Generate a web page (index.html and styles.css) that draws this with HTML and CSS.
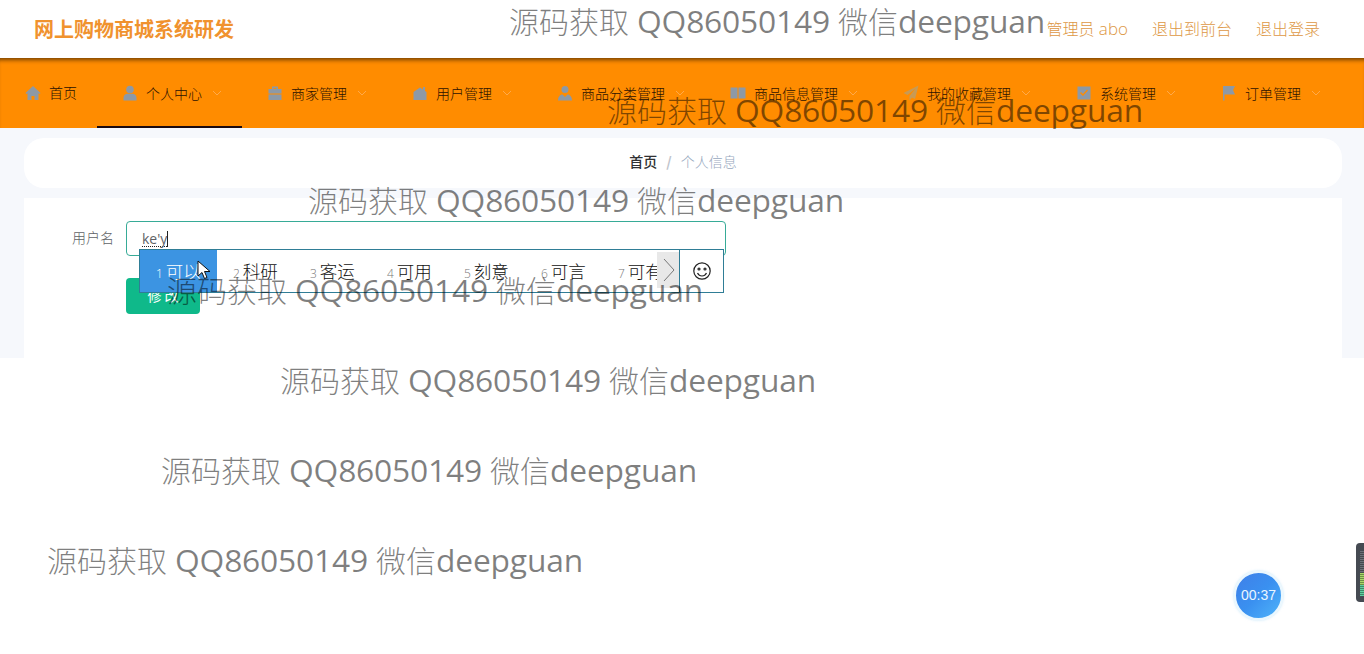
FILE: index.html
```html
<!DOCTYPE html>
<html lang="zh-CN">
<head>
<meta charset="utf-8">
<title>网上购物商城系统研发</title>
<link rel="stylesheet" href="styles.css">
</head>
<body>
<header class="topbar">
  <h1 class="brand">网上购物商城系统研发</h1>
  <div class="top-links">
    <span>管理员<span class="link-latin"> abo</span></span>
    <span>退出到前台</span>
    <span>退出登录</span>
  </div>
</header>
<nav class="nav">
  <a class="nav-item plain"><svg class="ico" viewBox="0 0 16 16"><path d="M8 1 0.5 8l1 1L2.500 8.200V15h4v-4h3v4h4V8.200L14.500 9l1-1z"/></svg><span>首页</span></a>
  <a class="nav-item active"><svg class="ico" viewBox="0 0 16 16"><circle cx="8" cy="4.500" r="3.800"/><path d="M1.500 15.500v-2.500c0-3 2.500-4.200 4-4.200h5c1.500 0 4 1.200 4 4.200v2.500z"/></svg><span>个人中心</span><svg class="chev" viewBox="0 0 10 6"><path d="M1 1l4 4 4-4"/></svg></a>
  <a class="nav-item"><svg class="ico" viewBox="0 0 16 16"><path d="M5 4V1.500h6V4h3.500v4.500h-13V4zM6.500 4h3V3h-3z"/><path d="M1.500 9.500h13V15h-13z"/></svg><span>商家管理</span><svg class="chev" viewBox="0 0 10 6"><path d="M1 1l4 4 4-4"/></svg></a>
  <a class="nav-item"><svg class="ico" viewBox="0 0 16 16"><path d="M1.500 7 8 2.500l3 2V2h2v4l1.500 1v8h-13z"/></svg><span>用户管理</span><svg class="chev" viewBox="0 0 10 6"><path d="M1 1l4 4 4-4"/></svg></a>
  <a class="nav-item"><svg class="ico" viewBox="0 0 16 16"><circle cx="8" cy="4.500" r="3.500"/><path d="M1 15.500c0-3.500 2-6 4.500-6L8 12l2.500-2.500c2.500 0 4.500 2.500 4.500 6z"/></svg><span>商品分类管理</span><svg class="chev" viewBox="0 0 10 6"><path d="M1 1l4 4 4-4"/></svg></a>
  <a class="nav-item"><svg class="ico" viewBox="0 0 16 16"><path d="M.5 2.500h7v11h-7z"/><path d="M8.500 2.500h7v11h-7z"/></svg><span>商品信息管理</span><svg class="chev" viewBox="0 0 10 6"><path d="M1 1l4 4 4-4"/></svg></a>
  <a class="nav-item"><svg class="ico faint" viewBox="0 0 16 16"><path d="M15.500.5 .5 8l4 2 8-6.500L6.500 11v4.500l2.500-3 3 1.500z"/></svg><span>我的收藏管理</span><svg class="chev" viewBox="0 0 10 6"><path d="M1 1l4 4 4-4"/></svg></a>
  <a class="nav-item"><svg class="ico" viewBox="0 0 16 16"><path fill-rule="evenodd" d="M1.500 1.500h13v13h-13zM4 8l3 3 5-5.500-1-1L7 9 5 7z"/></svg><span>系统管理</span><svg class="chev" viewBox="0 0 10 6"><path d="M1 1l4 4 4-4"/></svg></a>
  <a class="nav-item"><svg class="ico" viewBox="0 0 16 16"><path d="M2 1h12l-2 4 2 4.500H3.500V15.500H2z"/></svg><span>订单管理</span><svg class="chev" viewBox="0 0 10 6"><path d="M1 1l4 4 4-4"/></svg></a>
</nav>
<main class="main">
  <div class="crumbs">
    <span class="crumb-home">首页</span>
    <span class="crumb-sep">/</span>
    <span class="crumb-cur">个人信息</span>
  </div>
  <section class="form-card">
    <div class="form-row">
      <label class="form-label">用户名</label>
      <div class="input"><span class="typed">ke'y</span><span class="caret"></span></div>
    </div>
    <button class="submit" type="button">修 改</button>
  </section>
</main>

<div class="ime">
  <div class="cand selected"><small>1</small>可以</div>
  <div class="cand"><small>2</small>科研</div>
  <div class="cand"><small>3</small>客运</div>
  <div class="cand"><small>4</small>可用</div>
  <div class="cand"><small>5</small>刻意</div>
  <div class="cand"><small>6</small>可言</div>
  <div class="cand"><small>7</small>可有</div>
  <div class="ime-next"><svg viewBox="0 0 14 26"><path d="M2 2l10 11L2 24"/></svg></div>
  <div class="ime-emoji"><svg viewBox="0 0 20 20"><circle cx="10" cy="10" r="8.200"/><circle cx="7" cy="8" r="1"/><circle cx="13" cy="8" r="1"/><path d="M5.500 12c1 2 2.500 3 4.500 3s3.500-1 4.500-3"/></svg></div>
</div>
<svg class="pointer" viewBox="0 0 14 20"><path d="M1 1v15l4-3.500 2.500 6 2.500-1-2.500-6H13z"/></svg>

<div class="wm wm1">源码获取<span class="wm-latin"> QQ86050149 </span>微信<span class="wm-latin">deepguan</span></div>
<div class="wm wm2">源码获取<span class="wm-latin"> QQ86050149 </span>微信<span class="wm-latin">deepguan</span></div>
<div class="wm wm3">源码获取<span class="wm-latin"> QQ86050149 </span>微信<span class="wm-latin">deepguan</span></div>
<div class="wm wm4">源码获取<span class="wm-latin"> QQ86050149 </span>微信<span class="wm-latin">deepguan</span></div>
<div class="wm wm5">源码获取<span class="wm-latin"> QQ86050149 </span>微信<span class="wm-latin">deepguan</span></div>
<div class="wm wm6">源码获取<span class="wm-latin"> QQ86050149 </span>微信<span class="wm-latin">deepguan</span></div>
<div class="wm wm7">源码获取<span class="wm-latin"> QQ86050149 </span>微信<span class="wm-latin">deepguan</span></div>

<div class="timer">00:37</div>
<div class="meter"><div class="meter-bars"></div></div>
</body>
</html>
```
FILE: styles.css
```css
* { box-sizing: border-box; }
html, body { margin: 0; padding: 0; }
body {
  height: 654px;
  overflow: hidden;
  background: #fff;
  font-family: "Noto Sans CJK SC", "Liberation Sans", sans-serif;
  position: relative;
}
.topbar {
  height: 58px;
  background: #fff;
  display: flex;
  align-items: center;
  justify-content: space-between;
  padding: 0 44px 0 34px;
}
.brand {
  margin: 0;
  font-size: 20px;
  font-weight: 700;
  line-height: 58px;
  color: #f0922e;
}
.top-links {
  display: flex;
  gap: 24px;
  padding-bottom: 3px;
  font-size: 16px;
  font-weight: 300;
  color: #dd9744;
  font-family: "Open Sans", "Noto Sans CJK SC", sans-serif;
}
.link-latin { font-size: 17px; white-space: pre; }
.nav {
  height: 70px;
  background: #ff8c00;
  display: flex;
  box-shadow: inset 0 5px 4px -3px rgba(70, 40, 0, .75);
  position: relative;
}
.nav-item {
  height: 70px;
  padding: 0 40px 0 25px;
  display: flex;
  align-items: center;
  position: relative;
  font-size: 14px;
  font-weight: 300;
  color: #2c1200;
  white-space: nowrap;
}
.nav-item.plain { padding-right: 20px; }
.nav-item.plain span { position: relative; top: -1px; }
.nav-item.active { border-bottom: 2px solid #1a0a10; padding-top: 2px; }
.nav-item .ico { width: 16px; height: 16px; margin-right: 8px; fill: #8d99a6; flex: none; }
.nav-item .ico.faint { fill: #c79a55; }
.nav-item .chev {
  position: absolute;
  right: 20px;
  top: 32px;
  width: 10px;
  height: 6px;
  fill: none;
  stroke: #ffa94a;
  stroke-width: 1;
}
.main {
  height: 230px;
  background: #f6f8fc;
  padding: 10px 22px 0 24px;
  overflow: hidden;
}
.crumbs {
  height: 50px;
  padding-bottom: 5px;
  background: #fff;
  border-radius: 20px;
  display: flex;
  align-items: center;
  justify-content: center;
  gap: 9px;
  font-size: 14px;
}
.crumb-home { color: #303133; font-weight: 500; }
.crumb-sep { color: #c0c4cc; font-weight: 700; }
.crumb-cur { color: #97a8be; font-weight: 300; }
.form-card {
  margin-top: 10px;
  height: 160px;
  background: #fff;
  padding: 23px 0 0 48px;
}
.form-row { display: flex; align-items: center; }
.form-label {
  width: 54px;
  padding-right: 12px;
  padding-bottom: 3px;
  font-size: 14px;
  font-weight: 300;
  color: #606266;
  white-space: nowrap;
  text-align: right;
}
.input {
  width: 600px;
  height: 35px;
  border: 1px solid #37ab97;
  border-radius: 4px;
  padding: 0 15px;
  display: flex;
  align-items: center;
  font-size: 14px;
  color: #606266;
  background: #fff;
  font-family: "Open Sans", sans-serif;
}
.typed { border-bottom: 1px dotted #222; line-height: 15px; margin-top: 1px; }
.caret { width: 1px; height: 16px; background: #222; margin-top: 1px; }
.submit {
  display: block;
  margin: 22px 0 0 54px;
  width: 74px;
  height: 36px;
  border: 0;
  border-radius: 4px;
  background: #0fb98a;
  color: #fff;
  font-size: 14px;
  font-family: inherit;
  padding: 0 0 3px;
}
.ime {
  position: absolute;
  left: 139px;
  top: 249px;
  width: 585px;
  height: 44px;
  background: #fff;
  border: 1px solid #2f7d96;
  display: flex;
  font-family: "Noto Sans CJK SC", sans-serif;
  font-weight: 300;
}
.cand {
  width: 77px;
  flex: none;
  padding-left: 16px;
  font-size: 17.500px;
  line-height: 42px;
  color: #111;
  white-space: nowrap;
  overflow: hidden;
}
.cand small { font-size: 12px; color: #777; margin-right: 3px; font-family: "Open Sans", sans-serif; }
.selected { background: #3c94e2; color: #fff; }
.selected small { color: #fff; }
.ime-next {
  position: absolute;
  left: 517px;
  top: 2px;
  width: 23px;
  height: 36px;
  background: #e8e8e8;
  display: flex;
  align-items: center;
  justify-content: center;
}
.ime-next svg { width: 14px; height: 26px; fill: none; stroke: #777; stroke-width: 1; }
.ime-emoji {
  position: absolute;
  left: 539px;
  top: 0;
  bottom: 0;
  right: 0;
  background: #fff;
  border-left: 1px solid #2f7d96;
  display: flex;
  align-items: center;
  justify-content: center;
}
.ime-emoji svg { width: 20px; height: 20px; fill: none; stroke: #222; stroke-width: 1.200; }
.pointer {
  position: absolute;
  left: 197px;
  top: 260px;
  width: 14px;
  height: 20px;
  fill: #fff;
  stroke: #111;
  stroke-width: 1;
}
.wm {
  position: absolute;
  font-family: "Open Sans", "Noto Sans CJK SC", sans-serif;
  font-weight: 300;
  font-size: 30px;
  line-height: 40px;
  color: rgba(0, 0, 0, .5);
  white-space: nowrap;
  pointer-events: none;
}
.wm-latin { font-size: 31.800px; font-weight: 400; letter-spacing: -.2px; white-space: pre; }
.wm1 { left: 509px; top: 1px; }
.wm2 { left: 607px; top: 90px; }
.wm3 { left: 308px; top: 180px; }
.wm4 { left: 167px; top: 270px; }
.wm5 { left: 280px; top: 360px; }
.wm6 { left: 161px; top: 450px; }
.wm7 { left: 47px; top: 540px; }
.timer {
  position: absolute;
  left: 1234px;
  top: 571px;
  width: 49px;
  height: 49px;
  border-radius: 50%;
  border: 2px solid #eaf7fe;
  background: linear-gradient(135deg, #3f7fe8 0%, #3a90f0 50%, #4fb4fa 100%);
  box-shadow: 0 0 3px rgba(150, 210, 245, .6);
  color: #eaf6ff;
  font: 14px/45px "Liberation Sans", sans-serif;
  text-align: center;
}
.meter {
  position: absolute;
  left: 1356px;
  top: 543px;
  width: 12px;
  height: 59px;
  border-radius: 4px;
  background: #454a52;
  padding: 8px 0 6px 4px;
}
.meter-bars {
  height: 100%;
  background:
    repeating-linear-gradient(180deg, transparent 0 1px, rgba(0, 0, 0, .35) 1px 2px),
    linear-gradient(180deg, #6b7078 0 50%, #a7d86a 50% 75%, #5fd0a0 75% 100%);
}
```
